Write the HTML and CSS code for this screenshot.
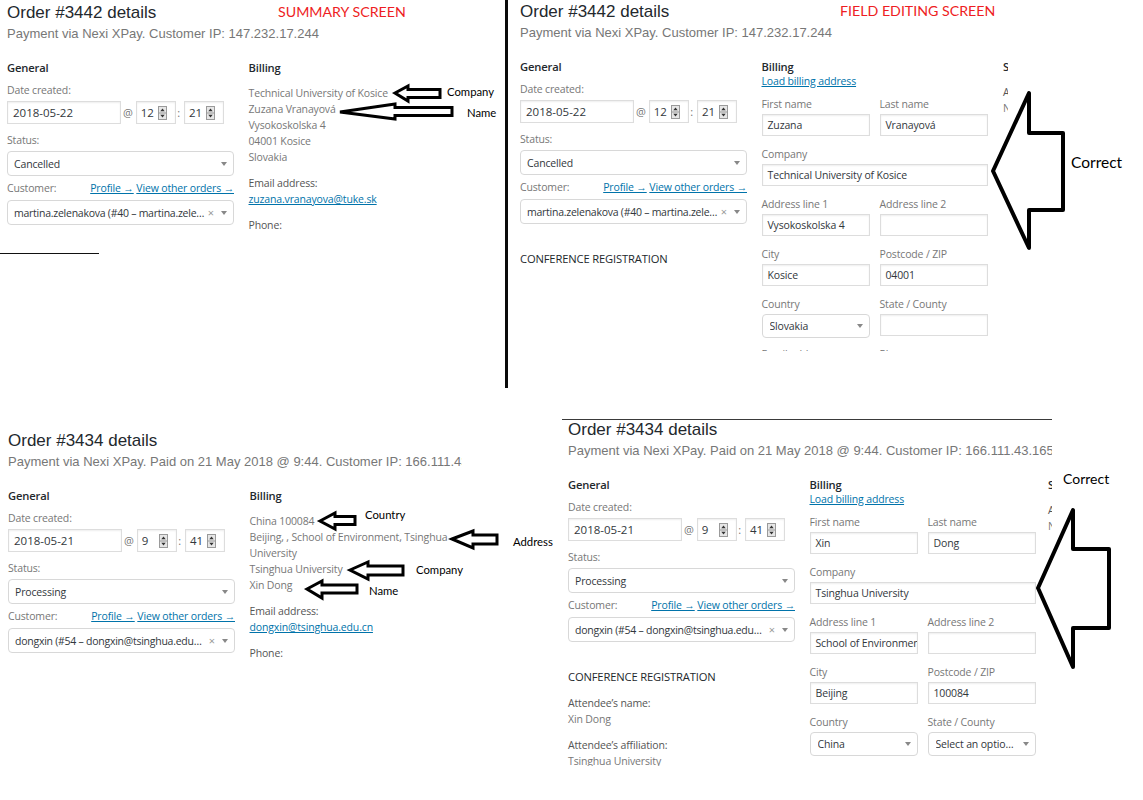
FILE: index.html
```html
<!DOCTYPE html>
<html lang="en">
<head>
<meta charset="utf-8">
<title>Order details – billing fields</title>
<link rel="stylesheet" href="styles.css">
</head>
<body>
<main class="board">
  <div class="row row-top">
    <!-- order 3442, read-only summary -->
    <section class="screen screen-tl">
      <h1 class="order-title">Order #3442 details</h1>
      <p class="order-meta">Payment via Nexi XPay. Customer IP: 147.232.17.244</p>
      <div class="order-cols">
        <div class="col">
          <h3 class="col-head">General</h3>
          <div class="lbl date-lbl">Date created:</div>
          <div class="date-row">
            <span class="inp inp-date">2018-05-22</span>
            <span class="sep at">@</span>
            <span class="inp inp-num">12<svg class="spin" width="9" height="14" viewBox="0 0 9 14"><rect x=".5" y=".5" width="8" height="13" fill="#e6e6e6" stroke="#9a9a9a"/><line x1="0" y1="7" x2="9" y2="7" stroke="#9a9a9a"/><path d="M2.3 5.2 4.5 2.6 6.7 5.2Z M2.3 8.8 4.5 11.4 6.7 8.8Z" fill="#333"/></svg></span>
            <span class="sep colon">:</span>
            <span class="inp inp-num">21<svg class="spin" width="9" height="14" viewBox="0 0 9 14"><rect x=".5" y=".5" width="8" height="13" fill="#e6e6e6" stroke="#9a9a9a"/><line x1="0" y1="7" x2="9" y2="7" stroke="#9a9a9a"/><path d="M2.3 5.2 4.5 2.6 6.7 5.2Z M2.3 8.8 4.5 11.4 6.7 8.8Z" fill="#333"/></svg></span>
          </div>
          <div class="lbl status-lbl">Status:</div>
          <div class="sel status-sel"><span class="sel-text">Cancelled</span><span class="caret"></span></div>
          <div class="cust-row"><span>Customer:</span><span class="cust-links"><a href="#">Profile →</a> <a href="#">View other orders →</a></span></div>
          <div class="sel cust-sel"><span class="sel-text">martina.zelenakova (#40 – martina.zele…</span><span class="clear">×</span><span class="caret"></span></div>
        </div>
        <div class="col">
          <h3 class="col-head">Billing</h3>
          <p class="addr">Technical University of Kosice<br>Zuzana Vranayová<br>Vysokoskolska 4<br>04001 Kosice<br>Slovakia</p>
          <p class="meta"><span class="meta-label">Email address:</span><a href="#">zuzana.vranayova@tuke.sk</a></p>
          <p class="meta"><span class="meta-label">Phone:</span></p>
        </div>
      </div>
    </section>

    <div class="divider"></div>

    <!-- order 3442, billing fields open for editing -->
    <section class="screen screen-tr">
      <h1 class="order-title">Order #3442 details</h1>
      <p class="order-meta">Payment via Nexi XPay. Customer IP: 147.232.17.244</p>
      <div class="order-cols">
        <div class="col">
          <h3 class="col-head">General</h3>
          <div class="lbl date-lbl">Date created:</div>
          <div class="date-row">
            <span class="inp inp-date">2018-05-22</span>
            <span class="sep at">@</span>
            <span class="inp inp-num">12<svg class="spin" width="9" height="14" viewBox="0 0 9 14"><rect x=".5" y=".5" width="8" height="13" fill="#e6e6e6" stroke="#9a9a9a"/><line x1="0" y1="7" x2="9" y2="7" stroke="#9a9a9a"/><path d="M2.3 5.2 4.5 2.6 6.7 5.2Z M2.3 8.8 4.5 11.4 6.7 8.8Z" fill="#333"/></svg></span>
            <span class="sep colon">:</span>
            <span class="inp inp-num">21<svg class="spin" width="9" height="14" viewBox="0 0 9 14"><rect x=".5" y=".5" width="8" height="13" fill="#e6e6e6" stroke="#9a9a9a"/><line x1="0" y1="7" x2="9" y2="7" stroke="#9a9a9a"/><path d="M2.3 5.2 4.5 2.6 6.7 5.2Z M2.3 8.8 4.5 11.4 6.7 8.8Z" fill="#333"/></svg></span>
          </div>
          <div class="lbl status-lbl">Status:</div>
          <div class="sel status-sel"><span class="sel-text">Cancelled</span><span class="caret"></span></div>
          <div class="cust-row"><span>Customer:</span><span class="cust-links"><a href="#">Profile →</a> <a href="#">View other orders →</a></span></div>
          <div class="sel cust-sel"><span class="sel-text">martina.zelenakova (#40 – martina.zele…</span><span class="clear">×</span><span class="caret"></span></div>
          <h3 class="conf-head">CONFERENCE REGISTRATION</h3>
        </div>
        <div class="col">
          <h3 class="col-head">Billing</h3>
          <a class="load-link" href="#">Load billing address</a>
          <div class="fields">
            <div class="fld"><div class="lbl">First name</div><div class="inp">Zuzana</div></div>
            <div class="fld"><div class="lbl">Last name</div><div class="inp">Vranayová</div></div>
            <div class="fld full"><div class="lbl">Company</div><div class="inp">Technical University of Kosice</div></div>
            <div class="fld"><div class="lbl">Address line 1</div><div class="inp">Vysokoskolska 4</div></div>
            <div class="fld"><div class="lbl">Address line 2</div><div class="inp"></div></div>
            <div class="fld"><div class="lbl">City</div><div class="inp">Kosice</div></div>
            <div class="fld"><div class="lbl">Postcode / ZIP</div><div class="inp">04001</div></div>
            <div class="fld"><div class="lbl">Country</div><div class="sel"><span class="sel-text">Slovakia</span><span class="caret"></span></div></div>
            <div class="fld"><div class="lbl">State / County</div><div class="inp"></div></div>
            <div class="fld"><div class="lbl">Email address</div><div class="inp"></div></div>
            <div class="fld"><div class="lbl">Phone</div><div class="inp"></div></div>
          </div>
        </div>
        <div class="col">
          <h3 class="col-head">Shipping</h3>
          <p class="addr"><span class="meta-label">Address:</span>No shipping address set.</p>
        </div>
      </div>
    </section>
  </div>

  <div class="row row-bottom">
    <!-- order 3434, read-only summary -->
    <section class="screen screen-bl">
      <h1 class="order-title">Order #3434 details</h1>
      <p class="order-meta">Payment via Nexi XPay. Paid on 21 May 2018 @ 9:44. Customer IP: 166.111.43.165</p>
      <div class="order-cols">
        <div class="col">
          <h3 class="col-head">General</h3>
          <div class="lbl date-lbl">Date created:</div>
          <div class="date-row">
            <span class="inp inp-date">2018-05-21</span>
            <span class="sep at">@</span>
            <span class="inp inp-num">9<svg class="spin" width="9" height="14" viewBox="0 0 9 14"><rect x=".5" y=".5" width="8" height="13" fill="#e6e6e6" stroke="#9a9a9a"/><line x1="0" y1="7" x2="9" y2="7" stroke="#9a9a9a"/><path d="M2.3 5.2 4.5 2.6 6.7 5.2Z M2.3 8.8 4.5 11.4 6.7 8.8Z" fill="#333"/></svg></span>
            <span class="sep colon">:</span>
            <span class="inp inp-num">41<svg class="spin" width="9" height="14" viewBox="0 0 9 14"><rect x=".5" y=".5" width="8" height="13" fill="#e6e6e6" stroke="#9a9a9a"/><line x1="0" y1="7" x2="9" y2="7" stroke="#9a9a9a"/><path d="M2.3 5.2 4.5 2.6 6.7 5.2Z M2.3 8.8 4.5 11.4 6.7 8.8Z" fill="#333"/></svg></span>
          </div>
          <div class="lbl status-lbl">Status:</div>
          <div class="sel status-sel"><span class="sel-text">Processing</span><span class="caret"></span></div>
          <div class="cust-row"><span>Customer:</span><span class="cust-links"><a href="#">Profile →</a> <a href="#">View other orders →</a></span></div>
          <div class="sel cust-sel"><span class="sel-text">dongxin (#54 – dongxin@tsinghua.edu…</span><span class="clear">×</span><span class="caret"></span></div>
        </div>
        <div class="col">
          <h3 class="col-head">Billing</h3>
          <p class="addr">China 100084<br>Beijing, , School of Environment, Tsinghua University<br>Tsinghua University<br>Xin Dong</p>
          <p class="meta"><span class="meta-label">Email address:</span><a href="#">dongxin@tsinghua.edu.cn</a></p>
          <p class="meta"><span class="meta-label">Phone:</span></p>
        </div>
      </div>
    </section>

    <!-- order 3434, billing fields open for editing -->
    <section class="screen screen-br">
      <h1 class="order-title">Order #3434 details</h1>
      <p class="order-meta">Payment via Nexi XPay. Paid on 21 May 2018 @ 9:44. Customer IP: 166.111.43.165</p>
      <div class="order-cols">
        <div class="col">
          <h3 class="col-head">General</h3>
          <div class="lbl date-lbl">Date created:</div>
          <div class="date-row">
            <span class="inp inp-date">2018-05-21</span>
            <span class="sep at">@</span>
            <span class="inp inp-num">9<svg class="spin" width="9" height="14" viewBox="0 0 9 14"><rect x=".5" y=".5" width="8" height="13" fill="#e6e6e6" stroke="#9a9a9a"/><line x1="0" y1="7" x2="9" y2="7" stroke="#9a9a9a"/><path d="M2.3 5.2 4.5 2.6 6.7 5.2Z M2.3 8.8 4.5 11.4 6.7 8.8Z" fill="#333"/></svg></span>
            <span class="sep colon">:</span>
            <span class="inp inp-num">41<svg class="spin" width="9" height="14" viewBox="0 0 9 14"><rect x=".5" y=".5" width="8" height="13" fill="#e6e6e6" stroke="#9a9a9a"/><line x1="0" y1="7" x2="9" y2="7" stroke="#9a9a9a"/><path d="M2.3 5.2 4.5 2.6 6.7 5.2Z M2.3 8.8 4.5 11.4 6.7 8.8Z" fill="#333"/></svg></span>
          </div>
          <div class="lbl status-lbl">Status:</div>
          <div class="sel status-sel"><span class="sel-text">Processing</span><span class="caret"></span></div>
          <div class="cust-row"><span>Customer:</span><span class="cust-links"><a href="#">Profile →</a> <a href="#">View other orders →</a></span></div>
          <div class="sel cust-sel"><span class="sel-text">dongxin (#54 – dongxin@tsinghua.edu…</span><span class="clear">×</span><span class="caret"></span></div>
          <h3 class="conf-head">CONFERENCE REGISTRATION</h3>
          <div class="att-lbl">Attendee’s name:</div>
          <div class="att-val">Xin Dong</div>
          <div class="att-lbl">Attendee’s affiliation:</div>
          <div class="att-val">Tsinghua University</div>
        </div>
        <div class="col">
          <h3 class="col-head">Billing</h3>
          <a class="load-link" href="#">Load billing address</a>
          <div class="fields">
            <div class="fld"><div class="lbl">First name</div><div class="inp">Xin</div></div>
            <div class="fld"><div class="lbl">Last name</div><div class="inp">Dong</div></div>
            <div class="fld full"><div class="lbl">Company</div><div class="inp">Tsinghua University</div></div>
            <div class="fld"><div class="lbl">Address line 1</div><div class="inp">School of Environment</div></div>
            <div class="fld"><div class="lbl">Address line 2</div><div class="inp"></div></div>
            <div class="fld"><div class="lbl">City</div><div class="inp">Beijing</div></div>
            <div class="fld"><div class="lbl">Postcode / ZIP</div><div class="inp">100084</div></div>
            <div class="fld"><div class="lbl">Country</div><div class="sel"><span class="sel-text">China</span><span class="caret"></span></div></div>
            <div class="fld"><div class="lbl">State / County</div><div class="sel"><span class="sel-text">Select an optio…</span><span class="caret"></span></div></div>
          </div>
        </div>
        <div class="col col-ship">
          <h3 class="col-head">Shipping</h3>
          <p class="addr"><span class="meta-label">Address:</span>No shipping address set.</p>
        </div>
      </div>
    </section>
  </div>
</main>

<!-- hand-drawn callouts laid over the screens -->
<span class="note note-title n-summary">SUMMARY SCREEN</span>
<span class="note note-title n-editing">FIELD EDITING SCREEN</span>
<span class="note note-sm n-company1">Company</span>
<span class="note note-sm n-name1">Name</span>
<span class="note note-sm n-country2">Country</span>
<span class="note note-sm n-address2">Address</span>
<span class="note note-sm n-company2">Company</span>
<span class="note note-sm n-name2">Name</span>
<span class="note note-big n-correct1">Correct</span>
<span class="note note-mid n-correct2">Correct</span>

<svg class="marks" width="1143" height="800" viewBox="0 0 1143 800">
  <line x1="0" y1="253.5" x2="99" y2="253.5" stroke="#111" stroke-width="1"/>
  <g fill="#fff" stroke="#000" stroke-width="3" stroke-linejoin="miter">
    <polygon points="395,93 408,86 408,89.5 440,89.5 440,97.5 408,97.5 408,101"/>
    <polygon points="340,112 395,104 395,107.5 452,107.5 452,115.5 395,115.5 395,119"/>
    <polygon points="320,521 335,513 335,516.5 355,516.5 355,524.5 335,524.5 335,529"/>
    <polygon points="452,539 473,531 473,535 497,535 497,544 473,544 473,548"/>
    <polygon points="350,570 368,562 368,566 403,566 403,575 368,575 368,579"/>
    <polygon points="307,589 322,581 322,585 357,585 357,593 322,593 322,598"/>
  </g>
  <g fill="none" stroke="#000" stroke-width="4" stroke-linejoin="round">
    <polygon points="993,171 1029,93 1029,133 1063,133 1063,210 1029,210 1029,248"/>
    <polygon points="1038,588 1073,510 1073,549 1109,549 1109,628 1073,628 1073,667"/>
  </g>
</svg>
</body>
</html>
```

FILE: styles.css
```css
* { box-sizing: border-box; }

html, body {
  margin: 0;
  padding: 0;
  background: #fff;
}

body {
  position: relative;
  width: 1143px;
  height: 800px;
  overflow: hidden;
  font-family: "Open Sans", "Noto Sans", sans-serif;
  font-size: 10.5px;
  letter-spacing: -0.15px;
  color: #777;
}

a {
  color: #0073aa;
  text-decoration: underline;
}

/* ---------- collage grid ---------- */
.board {
  display: flex;
  flex-direction: column;
}

.row {
  display: flex;
  align-items: flex-start;
}

.row-top { height: 417px; }
.row-bottom { height: 383px; }

.screen {
  flex: none;
  overflow: hidden;
  padding-left: 7px;
}

.screen-tl { width: 505px; }

.divider {
  flex: none;
  width: 3px;
  height: 388px;
  background: #0a0a0a;
}

.screen-tr {
  width: 495px;
  height: 352px;
  margin: -1px 0 0 5px;
}

.screen-bl {
  width: 461px;
  margin: 11px 0 0 1px;
}

.screen-br {
  width: 490px;
  height: 347px;
  margin: 2px 0 0 100px;
  padding-left: 6px;
  border-top: 1px solid #3a3a3a;
}

/* ---------- order header ---------- */
.order-title {
  margin: 3px 0 0;
  font: 400 17px/20px "Liberation Sans", Arial, sans-serif;
  letter-spacing: 0;
  color: #23282d;
  white-space: nowrap;
}

.screen-br .order-title { margin-top: 0; }

.order-meta {
  margin: 3px 0 0;
  font: 400 13px/16px "Liberation Sans", Arial, sans-serif;
  letter-spacing: 0;
  color: #777;
  white-space: nowrap;
}

/* ---------- data columns ---------- */
.order-cols {
  display: flex;
  gap: 14.5px;
  margin-top: 18px;
}

.col {
  flex: none;
  width: 227px;
}

.screen-br .col-ship { margin-left: -3px; }

.col-head {
  margin: 0;
  font-size: 11.2px;
  line-height: 16px;
  font-weight: 600;
  color: #23282d;
  white-space: nowrap;
}

.lbl {
  line-height: 16px;
  color: #777;
  white-space: nowrap;
}

.date-lbl { margin-top: 6px; }
.status-lbl { margin-top: 8px; }

.date-row {
  display: flex;
  align-items: center;
  height: 23px;
  margin-top: 3px;
}

/* text inputs */
.inp {
  display: flex;
  align-items: center;
  height: 22px;
  padding: 0 5px;
  border: 1px solid #ddd;
  background: #fff;
  box-shadow: inset 0 1px 2px rgba(0, 0, 0, .07);
  color: #32373c;
  font-size: 10.5px;
  white-space: nowrap;
  overflow: hidden;
}

.inp-date {
  flex: none;
  width: 114px;
  height: 23px;
  font-size: 11.5px;
  letter-spacing: 0;
}

.inp-num {
  flex: none;
  width: 40px;
  height: 23px;
  padding: 0 8px 0 4px;
  justify-content: space-between;
  font-size: 11.5px;
  letter-spacing: 0;
}

.spin { flex: none; display: block; }

.sep {
  color: #777;
  font-size: 11px;
}

.at { margin: 0 3px 0 2px; }
.colon { margin: 0 4px 0 1.5px; }

/* select boxes */
.sel {
  display: flex;
  align-items: center;
  height: 25px;
  padding: 0 6px 0 6px;
  border: 1px solid #d8d8d8;
  border-radius: 4px;
  background: #fff;
  color: #32373c;
  white-space: nowrap;
}

.status-sel { margin-top: 3px; }
.cust-sel { margin-top: 4px; }

.sel-text {
  flex: 1;
  min-width: 0;
  overflow: hidden;
}

.cust-sel .sel-text { letter-spacing: -0.25px; }

.clear {
  flex: none;
  margin: 0 7px 0 1px;
  color: #999;
  font-size: 11px;
}

.caret {
  flex: none;
  width: 0;
  height: 0;
  border-style: solid;
  border-width: 4px 3.5px 0;
  border-color: #888 transparent transparent;
}

.cust-row {
  display: flex;
  margin-top: 4px;
  line-height: 16px;
  white-space: nowrap;
}

.cust-links { margin-left: auto; }

.conf-head {
  margin: 27px 0 0;
  font-size: 11.2px;
  line-height: 16px;
  font-weight: 400;
  color: #23282d;
  white-space: nowrap;
}

.att-lbl {
  margin-top: 10px;
  line-height: 16px;
  color: #555;
}

.att-val {
  line-height: 16px;
  color: #777;
  white-space: nowrap;
}

/* summary text */
.addr {
  margin: 9px 0 0;
  line-height: 16px;
  color: #777;
}

.meta {
  margin: 10px 0 0;
  line-height: 16px;
}

.meta-label {
  display: block;
  color: #555;
}

/* editable billing form */
.load-link {
  display: block;
  margin-top: -2px;
  line-height: 16px;
  white-space: nowrap;
}

.fields {
  display: grid;
  grid-template-columns: 108px 108px;
  gap: 10px;
  margin-top: 7px;
}

.fld.full { grid-column: 1 / -1; }

.fld .lbl { margin-bottom: 2px; }

.fld .sel {
  height: 24px;
  margin-bottom: -2px;
  padding-left: 7px;
}

/* ---------- callouts ---------- */
.note {
  position: absolute;
  font-family: Lato, "Open Sans", sans-serif;
  line-height: 1;
  letter-spacing: 0;
  color: #000;
  white-space: nowrap;
}

.note-title { color: #ee1d23; font-size: 14.2px; }
.note-sm { font-size: 11.3px; }
.note-big { font-size: 15.5px; }
.note-mid { font-size: 14px; }

.n-summary { left: 278px; top: 4.5px; }
.n-editing { left: 840px; top: 3.5px; }
.n-company1 { left: 447px; top: 86px; }
.n-name1 { left: 467px; top: 107px; }
.n-country2 { left: 365px; top: 509px; }
.n-address2 { left: 513px; top: 536px; }
.n-company2 { left: 416px; top: 564px; }
.n-name2 { left: 369px; top: 585px; }
.n-correct1 { left: 1071px; top: 155px; }
.n-correct2 { left: 1063px; top: 472px; }

.marks {
  position: absolute;
  left: 0;
  top: 0;
  pointer-events: none;
}
```
